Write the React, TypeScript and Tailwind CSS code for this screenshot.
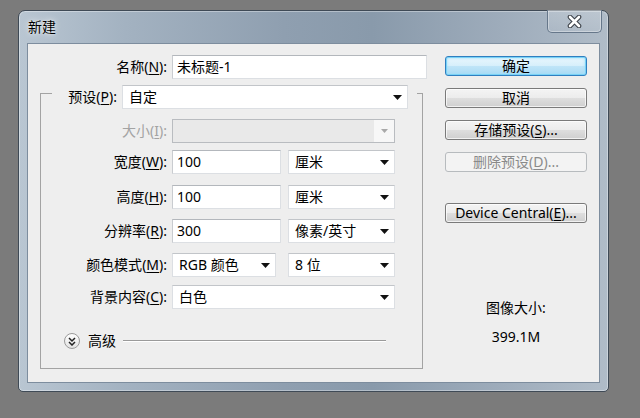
import React from "react";

const Mn = ({ t, k, tail = ":" }: { t: string; k: string; tail?: string }) => (
  <>
    {t}(<span className="underline underline-offset-[2px] decoration-1">{k}</span>){tail}
  </>
);

const Arrow = ({ dis }: { dis?: boolean }) => (
  <svg width="9" height="5" viewBox="0 0 9 5" className="shrink-0">
    <path d="M0 0 H9 L4.5 5 Z" fill={dis ? "#a8a8a8" : "#111"} />
  </svg>
);

const Field = ({ v, w }: { v: string; w: string }) => (
  <div
    className={`${w} h-[24px] bg-white border border-[#dcdfe3] border-t-[#b3b7bc] border-l-[#c9ccd0] pl-[4px] leading-[22px] text-[14px] text-black`}
  >
    {v}
  </div>
);

const Sel = ({ v, w, pl = "pl-[6px]" }: { v: string; w: string; pl?: string }) => (
  <div
    className={`${w} h-[24px] bg-white border border-[#dcdfe3] border-t-[#c2c5c9] ${pl} pr-[5px] flex items-center justify-between text-[14px] text-black`}
  >
    <span className="leading-[22px]">{v}</span>
    <Arrow />
  </div>
);

const Row = ({ label, children, mt, dis }: { label: React.ReactNode; children: React.ReactNode; mt: string; dis?: boolean }) => (
  <div className={`flex items-center h-[24px] ${mt}`}>
    <div className={`w-[126px] text-right text-[14px] leading-[24px] ${dis ? "text-[#a3a3a3]" : "text-black"}`}>{label}</div>
    <div className="ml-[5px] flex items-center">{children}</div>
  </div>
);

const Btn = ({ children, mt, def, dis }: { children: React.ReactNode; mt: string; def?: boolean; dis?: boolean }) => {
  const base = "w-[142px] h-[20px] rounded-[3px] border flex items-center justify-center text-[14px] leading-[18px]";
  const look = def
    ? "border-[#2f7fc0] bg-[linear-gradient(180deg,#eaf7fd_0%,#d6effb_50%,#bfe5f8_51%,#a9daf4_100%)] shadow-[inset_0_0_0_1px_#79d2f6,inset_0_0_3px_1px_#9fe0fa] text-black"
    : dis
    ? "border-[#b7bbbe] bg-[#f3f3f3] text-[#8a8a8a]"
    : "border-[#7a7a7a] bg-[linear-gradient(180deg,#f4f4f4_0%,#ececec_50%,#dedede_51%,#cfcfcf_100%)] shadow-[inset_0_0_0_1px_rgba(255,255,255,0.7)] text-black";
  return <div className={`${base} ${look} ${mt}`}>{children}</div>;
};

export default function App() {
  return (
    <div className="w-[640px] h-[418px] bg-[#7b7b7b] pt-[10px] pl-[18px] overflow-hidden font-['Noto_Sans','Noto_Sans_CJK_SC',sans-serif]">
      <div className="w-[591px] h-[382px] rounded-t-[7px] rounded-b-[5px] border border-[#3f4a56] bg-[linear-gradient(90deg,#b9c6d2_0%,#a3b2c1_18%,#8f9fb0_45%,#899aab_60%,#9eacbb_82%,#b0bcc8_100%)] shadow-[inset_0_0_0_1px_rgba(255,255,255,0.35)] flex flex-col px-[8px] pb-[8px]">
        {/* title bar */}
        <div className="h-[32px] flex items-start justify-between">
          <div className="mt-[9px] ml-[1px] text-[14px] leading-[14px] text-black [text-shadow:0_0_6px_rgba(255,255,255,0.9),0_0_2px_rgba(255,255,255,0.8)]">
            新建
          </div>
          <div className="-mt-px -mr-[2px] w-[55px] h-[23px] rounded-b-[5px] border border-t-0 border-[#66778a] bg-[linear-gradient(180deg,rgba(255,255,255,0.18),rgba(255,255,255,0.06))] shadow-[inset_0_0_0_1px_rgba(255,255,255,0.35)] flex items-center justify-center">
            <svg width="15" height="13" viewBox="0 0 15 13">
              <path d="M3 2 L12 11 M12 2 L3 11" stroke="#3a3f46" strokeWidth="4.6" strokeLinecap="round" />
              <path d="M3 2 L12 11 M12 2 L3 11" stroke="#ffffff" strokeWidth="2.6" strokeLinecap="round" />
            </svg>
          </div>
        </div>
        {/* client */}
        <div className="flex-1 bg-[#eeeeee] border border-[#7d8d9e] flex">
          {/* left column */}
          <div className="w-[400px] pl-[12px] pt-[11px]">
            <div className="flex items-center h-[24px]">
              <div className="w-[127px] text-right text-[14px] leading-[24px] text-black">
                <Mn t="名称" k="N" />
              </div>
              <div className="ml-[5px]">
                <Field v="未标题-1" w="w-[255px]" />
              </div>
            </div>
            {/* group */}
            <div className="mt-[6px] w-[383px]">
              <div className="flex h-[24px]">
                <div className="w-[12px] mt-[8px] border-l border-t border-[#a3a3a3]" />
                <div className="w-[65px] text-right text-[14px] leading-[24px] text-black">
                  <Mn t="预设" k="P" />
                </div>
                <div className="ml-[5px]">
                  <Sel v="自定" w="w-[286px]" />
                </div>
                <div className="ml-[9px] w-[6px] mt-[8px] border-t border-r border-[#a3a3a3]" />
              </div>
              <div className="h-[260px] border-l border-r border-b border-[#a3a3a3] flex flex-col">
                <Row label={<Mn t="大小" k="I" />} mt="mt-[10px]" dis>
                  <div className="w-[223px] h-[24px] border border-[#b9bcc0] bg-[#e9e9e9] flex justify-end">
                    <div className="w-[20px] h-full bg-[#f7f7f7] flex items-center justify-center">
                      <svg width="7" height="4" viewBox="0 0 7 4">
                        <path d="M0 0 H7 L3.5 4 Z" fill="#a9a9a9" />
                      </svg>
                    </div>
                  </div>
                </Row>
                <Row label={<Mn t="宽度" k="W" />} mt="mt-[7px]">
                  <Field v="100" w="w-[109px]" />
                  <div className="ml-[7px]">
                    <Sel v="厘米" w="w-[107px]" />
                  </div>
                </Row>
                <Row label={<Mn t="高度" k="H" />} mt="mt-[11px]">
                  <Field v="100" w="w-[109px]" />
                  <div className="ml-[7px]">
                    <Sel v="厘米" w="w-[107px]" />
                  </div>
                </Row>
                <Row label={<Mn t="分辨率" k="R" />} mt="mt-[10px]">
                  <Field v="300" w="w-[109px]" />
                  <div className="ml-[7px]">
                    <Sel v="像素/英寸" w="w-[107px]" />
                  </div>
                </Row>
                <Row label={<Mn t="颜色模式" k="M" />} mt="mt-[10px]">
                  <Sel v="RGB 颜色" w="w-[104px]" />
                  <div className="ml-[12px]">
                    <Sel v="8 位" w="w-[107px]" />
                  </div>
                </Row>
                <Row label={<Mn t="背景内容" k="C" />} mt="mt-[8px]">
                  <Sel v="白色" w="w-[223px]" />
                </Row>
                <div className="mt-[24px] h-[16px] flex items-center">
                  <div className="ml-[23px] w-[16px] h-[16px] rounded-full border border-[#9a9a9a] bg-[linear-gradient(180deg,#ffffff,#e2e2e2)] flex items-center justify-center">
                    <svg width="8" height="9" viewBox="0 0 8 9">
                      <path d="M1 1 L4 4 L7 1 M1 5 L4 8 L7 5" stroke="#222" strokeWidth="1.5" fill="none" />
                    </svg>
                  </div>
                  <div className="ml-[8px] text-[14px] leading-[16px] text-black">高级</div>
                  <div className="ml-[7px] w-[263px] h-[2px] border-t border-[#9a9a9a] border-b border-b-white" />
                </div>
              </div>
            </div>
          </div>
          {/* right column */}
          <div className="ml-[17px] w-[142px] pt-[12px] flex flex-col">
            <Btn mt="" def>
              确定
            </Btn>
            <Btn mt="mt-[12px]">取消</Btn>
            <Btn mt="mt-[12px]">
              存储预设(<span className="underline underline-offset-[2px]">S</span>)...
            </Btn>
            <Btn mt="mt-[12px]" dis>
              删除预设(<span className="underline underline-offset-[2px]">D</span>)...
            </Btn>
            <Btn mt="mt-[31px]">
              Device Central(<span className="underline underline-offset-[2px]">E</span>)...
            </Btn>
            <div className="mt-[75px] text-center text-[14px] leading-[20px] text-black">图像大小:</div>
            <div className="mt-[9px] text-center text-[14px] leading-[20px] text-black">399.1M</div>
          </div>
        </div>
      </div>
    </div>
  );
}
